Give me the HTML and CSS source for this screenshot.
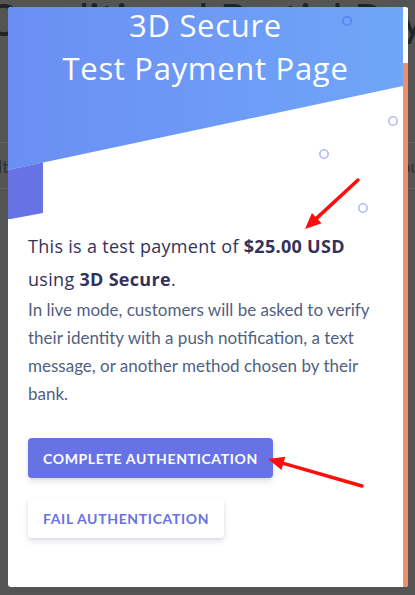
FILE: index.html
```html
<!DOCTYPE html>
<html lang="en">
<head>
<meta charset="utf-8">
<title>3D Secure Test Payment Page</title>
<link rel="stylesheet" href="styles.css">
</head>
<body>
  <div class="page">
    <div class="page-title">Conditional Partial Payment</div>
    <div class="page-row"><span>Result</span><span>Amount paid</span></div>
  </div>

  <div class="modal">
    <div class="frame">
      <header class="hero">
        <svg class="hero-bg" width="395" height="212" viewBox="0 0 395 212" aria-hidden="true">
          <defs>
            <linearGradient id="heroGrad" x1="0" y1="0" x2="1" y2="0">
              <stop offset="0" stop-color="#6b8ef4"/>
              <stop offset="1" stop-color="#6fa6f8"/>
            </linearGradient>
          </defs>
          <polygon points="0,0 395,0 395,79 0,163" fill="url(#heroGrad)"/>
          <polygon points="0,163 35,155.5 35,206 0,212.5" fill="#6772e5"/>
          <circle cx="339" cy="14" r="4.2" fill="none" stroke="#5b80ef" stroke-width="1.6"/>
          <circle cx="385" cy="114" r="4.2" fill="none" stroke="#afbdf6" stroke-width="1.6"/>
          <circle cx="316" cy="147" r="4.2" fill="none" stroke="#afbdf6" stroke-width="1.6"/>
          <circle cx="355" cy="201" r="4.2" fill="none" stroke="#afbdf6" stroke-width="1.6"/>
        </svg>
        <h1 class="hero-title">3D Secure<br>Test Payment Page</h1>
      </header>

      <section class="content">
        <p class="lead">This is a test payment of <strong>$25.00 USD</strong> using <strong>3D Secure</strong>.</p>
        <p class="note">In live mode, customers will be asked to verify their identity with a push notification, a text message, or another method chosen by their bank.</p>
        <div class="actions">
          <button class="btn btn-primary" type="button">Complete authentication</button>
          <button class="btn btn-secondary" type="button">Fail authentication</button>
        </div>
      </section>
    </div>
    <div class="edge"></div>

    <svg class="annotations" width="400" height="580" viewBox="0 0 400 580" aria-hidden="true">
      <line x1="350" y1="173" x2="308.7" y2="211.1" stroke="#ff0d0d" stroke-width="3.5" stroke-linecap="round"/>
      <polygon points="297,222 313.5,216.2 308.7,211.1 303.9,206" fill="#ff0d0d"/>
      <line x1="354" y1="479" x2="275.4" y2="456.4" stroke="#ff0d0d" stroke-width="3.5" stroke-linecap="round"/>
      <polygon points="260,452 277.3,449.7 275.4,456.4 273.5,463.1" fill="#ff0d0d"/>
    </svg>
  </div>
</body>
</html>
```

FILE: styles.css
```css
* {
  box-sizing: border-box;
}

html, body {
  margin: 0;
  padding: 0;
}

body {
  width: 415px;
  height: 595px;
  overflow: hidden;
  background: #545454;
  font-family: Lato, "Open Sans", sans-serif;
  position: relative;
}

/* Underlying page, dimmed by the overlay */
.page {
  color: #1d2327;
  width: 415px;
  overflow: hidden;
}

.page-title {
  font-size: 44px;
  line-height: 44px;
  margin: -3px 0 0 -14px;
  white-space: nowrap;
}

.page-row {
  margin-top: 101px;
  height: 47px;
  border-top: 1px solid #636363;
  border-bottom: 1px solid #636363;
  display: flex;
  justify-content: space-between;
  align-items: center;
  font-size: 18px;
  color: #2b3338;
  margin-left: -40px;
  margin-right: -60px;
}

/* Modal */
.modal {
  position: absolute;
  left: 8px;
  top: 7px;
  width: 400px;
  height: 580px;
  display: flex;
  background: #fff;
  border-radius: 3px;
  overflow: hidden;
}

.frame {
  width: 395px;
  display: flex;
  flex-direction: column;
}

.edge {
  width: 5px;
  background: linear-gradient(to bottom, #ffffff 0, #ffffff 56px, #ef8f6a 56px, #ef8f6a 100%);
}

.hero {
  position: relative;
  height: 212px;
  flex: none;
}

.hero-bg {
  position: absolute;
  left: 0;
  top: 0;
}

.hero-title {
  position: relative;
  margin: -3px 0 0;
  text-align: center;
  color: #fff;
  font-family: "Open Sans", Lato, sans-serif;
  font-weight: 400;
  font-size: 31px;
  letter-spacing: 0.7px;
  line-height: 43px;
}

.content {
  padding: 11px 20px 0;
}

.lead {
  margin: 0;
  font-family: "Open Sans", Lato, sans-serif;
  font-size: 18px;
  letter-spacing: 0.3px;
  line-height: 33px;
  color: #32325d;
  font-weight: 500;
}

.lead strong {
  font-weight: 700;
}

.note {
  margin: 0;
  font-size: 17px;
  line-height: 28px;
  color: #525f7f;
}

.actions {
  margin-top: 30px;
  display: flex;
  flex-direction: column;
  align-items: flex-start;
  gap: 20px;
}

.btn {
  height: 40px;
  padding: 0 15px;
  border: none;
  border-radius: 4px;
  font-family: Lato, "Open Sans", sans-serif;
  font-weight: 700;
  font-size: 14px;
  letter-spacing: 0.65px;
  text-transform: uppercase;
  box-shadow: 0 4px 6px rgba(50, 50, 93, 0.11), 0 1px 3px rgba(0, 0, 0, 0.08);
  cursor: pointer;
}

.btn-primary {
  background: #6772e5;
  color: #fff;
}

.btn-secondary {
  background: #fff;
  color: #6772e5;
}

.annotations {
  position: absolute;
  left: 0;
  top: 0;
  pointer-events: none;
}
```
